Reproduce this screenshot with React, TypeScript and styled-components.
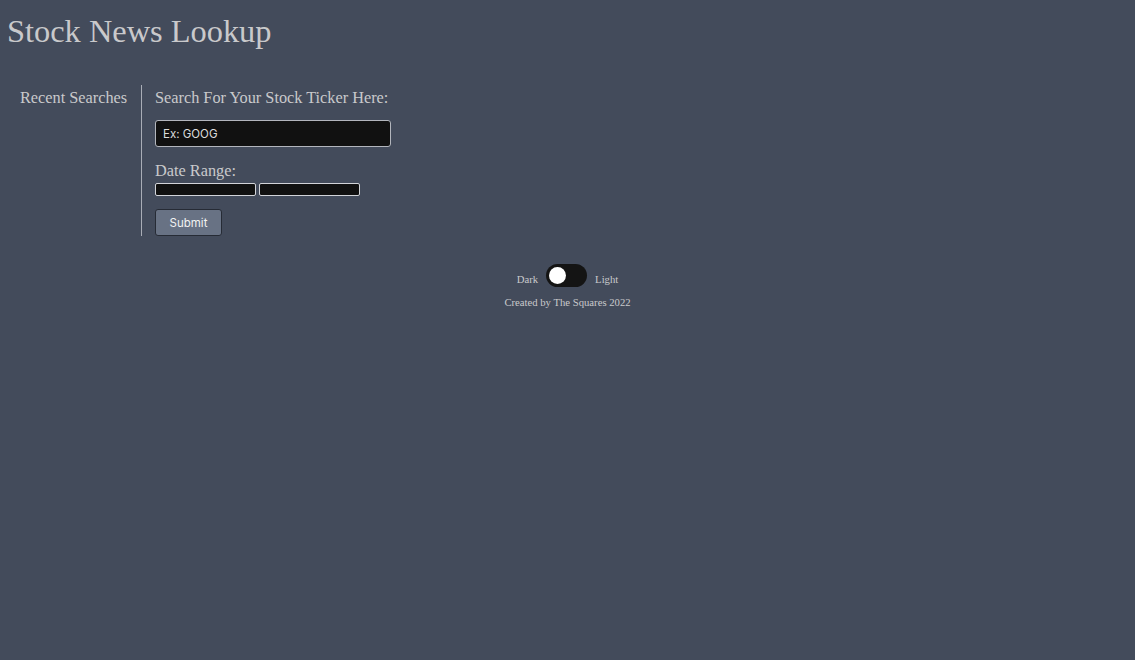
import styled, { createGlobalStyle } from "styled-components";

const GlobalStyle = createGlobalStyle`
  html, body {
    margin: 0;
    padding: 0;
    background-color: #434b5b;
    min-height: 100%;
  }
  body {
    font-family: "Liberation Serif", "Times New Roman", serif;
    color: #c9c9cb;
  }
`;

const Page = styled.div`
  min-height: 660px;
  background-color: #434b5b;
`;

const Title = styled.h1`
  margin: 0;
  padding: 13px 0 0 7px;
  font-size: 32.4px;
  font-weight: 400;
  line-height: 37px;
  color: #c9c9cb;
`;

const Main = styled.div`
  display: flex;
  margin-top: 35px;
`;

const Sidebar = styled.aside`
  width: 107px;
  padding: 2px 14px 0 20px;
  box-sizing: content-box;
  border-right: 1px solid #a9adb6;
  min-height: 149px;
  white-space: nowrap;
`;

const SideTitle = styled.p`
  margin: 0;
  font-size: 16.3px;
  line-height: 22px;
`;

const Form = styled.form`
  display: flex;
  flex-direction: column;
  align-items: flex-start;
  padding: 2px 0 0 13px;
`;

const Label = styled.label`
  font-size: 16.3px;
  line-height: 22px;
`;

const TickerInput = styled.input`
  margin-top: 11px;
  width: 236px;
  height: 27px;
  box-sizing: border-box;
  background-color: #111111;
  border: 1px solid #b3b6bd;
  border-radius: 3px;
  padding: 0 7px;
  color: #e0e0e0;
  font-family: Inter, "Liberation Sans", sans-serif;
  font-size: 11.5px;
  outline: none;

  &::placeholder {
    color: #dcdcdc;
  }
`;

const DateLabel = styled(Label)`
  margin-top: 13px;
`;

const DateRow = styled.div`
  display: flex;
  gap: 3px;
  margin-top: 1px;
`;

const DateInput = styled.input`
  width: 101px;
  height: 13px;
  box-sizing: border-box;
  background-color: #111111;
  border: 1px solid #d2d4d9;
  border-radius: 2px;
  padding: 0;
  outline: none;
`;

const SubmitButton = styled.button`
  margin-top: 13px;
  width: 67px;
  height: 27px;
  background-color: #687284;
  border: 1px solid #262b35;
  border-radius: 3px;
  color: #f2f2f2;
  font-family: Inter, "Liberation Sans", sans-serif;
  font-size: 11.5px;
  cursor: pointer;
`;

const Footer = styled.footer`
  display: flex;
  flex-direction: column;
  align-items: center;
  margin-top: 28px;
`;

const ToggleRow = styled.div`
  display: flex;
  align-items: center;
  gap: 8px;
  font-size: 10.7px;
`;

const ToggleText = styled.span`
  padding-top: 6px;
`;

const Switch = styled.div<{ $on: boolean }>`
  position: relative;
  width: 41px;
  height: 23px;
  border-radius: 12px;
  background-color: #141414;
`;

const Knob = styled.span<{ $on: boolean }>`
  position: absolute;
  top: 3px;
  left: ${(p) => (p.$on ? "21px" : "3px")};
  width: 17px;
  height: 17px;
  border-radius: 50%;
  background-color: #ffffff;
`;

const Credit = styled.p`
  margin: 9px 0 0;
  font-size: 10.7px;
`;

export default function App() {
  const light = false;
  return (
    <Page>
      <GlobalStyle />
      <Title>Stock News Lookup</Title>
      <Main>
        <Sidebar>
          <SideTitle>Recent Searches</SideTitle>
        </Sidebar>
        <Form onSubmit={(e) => e.preventDefault()}>
          <Label htmlFor="ticker">Search For Your Stock Ticker Here:</Label>
          <TickerInput id="ticker" type="text" placeholder="Ex: GOOG" />
          <DateLabel>Date Range:</DateLabel>
          <DateRow>
            <DateInput type="text" />
            <DateInput type="text" />
          </DateRow>
          <SubmitButton type="submit">Submit</SubmitButton>
        </Form>
      </Main>
      <Footer>
        <ToggleRow>
          <ToggleText>Dark</ToggleText>
          <Switch $on={light}>
            <Knob $on={light} />
          </Switch>
          <ToggleText>Light</ToggleText>
        </ToggleRow>
        <Credit>Created by The Squares 2022</Credit>
      </Footer>
    </Page>
  );
}
